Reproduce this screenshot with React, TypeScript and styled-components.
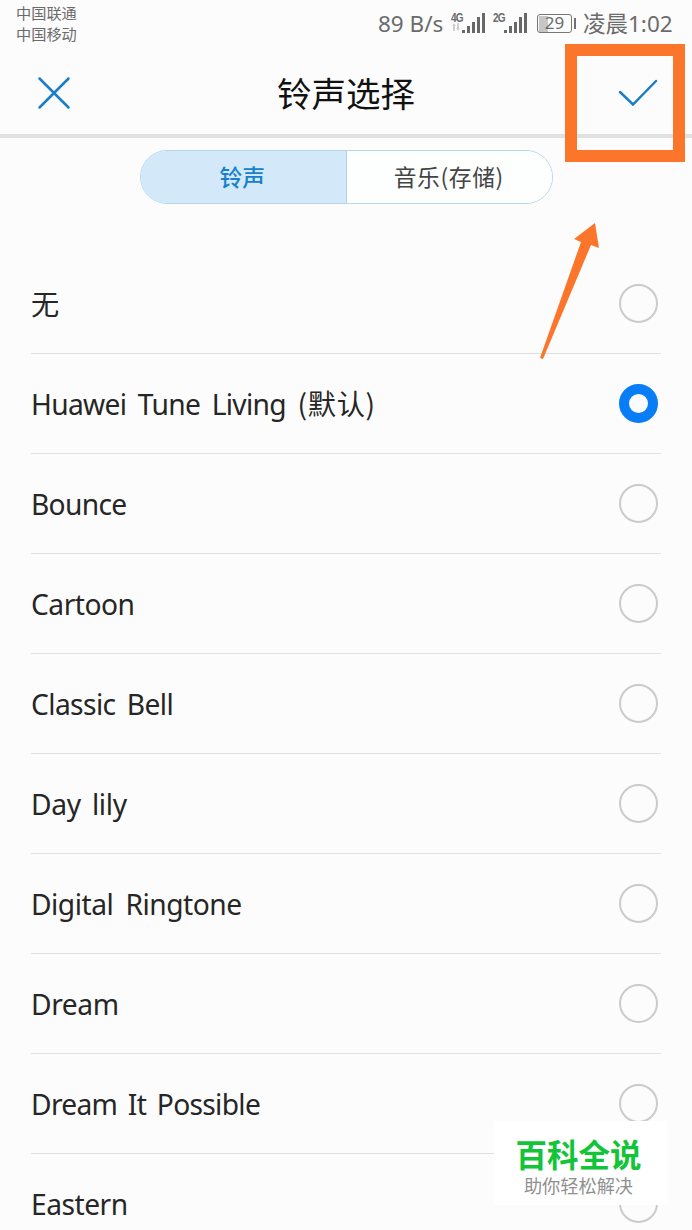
import React from "react";
import styled, { createGlobalStyle } from "styled-components";

const ORANGE = "#fb762b";

const GlobalStyle = createGlobalStyle`
  * { box-sizing: border-box; }
  html, body { margin: 0; background: #fcfcfc; overflow: hidden; }
`;

const Screen = styled.main`
  position: relative;
  display: flex;
  flex-direction: column;
  width: 692px;
  height: 1230px;
  overflow: hidden;
  background: #fcfcfc;
  font-family: "Noto Sans", "Noto Sans CJK SC", sans-serif;
  color: #262626;
`;

const StatusBar = styled.div`
  display: flex;
  flex: none;
  justify-content: space-between;
  height: 48px;
  padding: 2px 20px 0 16px;
  color: #6b6b6b;
`;

const Carriers = styled.div`
  display: flex;
  flex-direction: column;
  font: 15.2px/21px "Noto Sans CJK SC", sans-serif;
`;

const StatusItems = styled.div`
  display: flex;
  align-items: center;
  height: 42px;
`;

const StatusText = styled.span<{ $width: number }>`
  width: ${(p) => p.$width}px;
  padding-top: 1px;
  font-size: 22.5px;
  line-height: 40px;
  white-space: nowrap;
`;

const Clock = styled(StatusText)`
  margin-left: 7px;
`;

const Signal = styled.div<{ $gap: number }>`
  display: flex;
  align-items: flex-start;
  height: 22px;
  margin: 0 ${(p) => p.$gap}px 1px 0;
`;

const NetworkType = styled.div`
  display: flex;
  flex-direction: column;
  width: 11px;
  font: bold 10px/11px "Liberation Sans", sans-serif;
  letter-spacing: -0.9px;
`;

const Generation = styled.span`
  transform: scaleY(1.35);
`;

const Battery = styled.div`
  display: flex;
  align-items: center;
  justify-content: center;
  width: 35px;
  height: 19px;
  border: 1.5px solid #777;
  border-radius: 3px;
  background: linear-gradient(90deg, #c6c6c6 9px, transparent 9px) 1px 1px no-repeat;
  font-size: 17px;
  line-height: 16px;
`;

const BatteryTip = styled.div`
  width: 2px;
  height: 11px;
  margin-left: 2px;
  background: #707070;
`;

const Header = styled.header`
  display: grid;
  flex: none;
  grid-template-columns: 108px 1fr 108px;
  align-items: center;
  height: 90px;
  padding-top: 3px;
  border-bottom: 4px solid #e1e1e1;
`;

const IconButton = styled.button`
  display: flex;
  justify-content: center;
  padding: 0;
  border: 0;
  background: none;
`;

const Title = styled.h1`
  margin: 0;
  padding-bottom: 2px;
  font: 400 34.5px/50px "Noto Sans CJK SC", sans-serif;
  color: #111;
  text-align: center;
`;

const Tabs = styled.div`
  display: flex;
  flex: none;
  align-self: center;
  width: 413px;
  height: 54px;
  margin: 12px 0 50px;
  overflow: hidden;
  border: 1.5px solid #b5d8e8;
  border-radius: 27px;
`;

const Tab = styled.button<{ $active?: boolean }>`
  flex: 1;
  padding: ${(p) => (p.$active ? "0 2px 0 0" : "0 1px 0 0")};
  border: 0;
  border-right: ${(p) => (p.$active ? "1px solid #acd4e9" : "0")};
  background: ${(p) => (p.$active ? "#d3e8f8" : "#fdfefe")};
  color: ${(p) => (p.$active ? "#1681cb" : "#444")};
  font: ${(p) => (p.$active ? 500 : 400)} 22.8px/32px "Noto Sans CJK SC", sans-serif;
  letter-spacing: ${(p) => (p.$active ? 0 : 0.6)}px;
`;

const List = styled.div`
  display: flex;
  flex-direction: column;
  padding: 0 31px;
`;

const Row = styled.div`
  display: flex;
  flex: none;
  align-items: center;
  justify-content: space-between;
  height: 100px;
  padding-right: 3px;
  border-bottom: 1px solid #e1e1e1;
`;

const Label = styled.span<{ $tracking: number; $space: number }>`
  font-size: 28.2px;
  line-height: 40px;
  letter-spacing: ${(p) => p.$tracking}px;
  word-spacing: ${(p) => p.$space}px;
  white-space: nowrap;
`;

const Note = styled.span`
  font-family: "Noto Sans CJK SC", sans-serif;
  letter-spacing: 0.7px;
`;

const Radio = styled.span<{ $checked: boolean }>`
  width: 39px;
  height: 39px;
  border: ${(p) => (p.$checked ? "10px solid #087df5" : "2px solid #cbcbcb")};
  border-radius: 50%;
`;

const Highlight = styled.div`
  position: absolute;
  left: 565px;
  top: 44px;
  width: 120px;
  height: 118px;
  border: 12px solid ${ORANGE};
`;

const Pointer = styled.svg`
  position: absolute;
  left: 536px;
  top: 220px;
`;

const Watermark = styled.aside`
  position: absolute;
  left: 494px;
  top: 1121px;
  display: flex;
  flex-direction: column;
  align-items: center;
  width: 173px;
  height: 84px;
  padding: 12px 4px 0 0;
  background: #fff;
  font-family: "Noto Sans CJK SC", sans-serif;
`;

const Brand = styled.strong`
  font-size: 31.5px;
  line-height: 40px;
  font-weight: 700;
  color: #12c437;
`;

const Tagline = styled.span`
  font-size: 18.2px;
  line-height: 24px;
  color: #909090;
`;

const Bars = () => (
  <svg width="24" height="22" viewBox="0 0 24 22" fill="#686868">
    <path d="M0 18h3v3H0zM5 14h3v7H5zM10 10h3v11h-3zM15 5h3v16h-3zM20 1h3v20h-3z" />
  </svg>
);

const tones: { name: string; note?: string; tracking: number; space: number }[] = [
  { name: "无", tracking: 0, space: 0 },
  { name: "Huawei Tune Living ", note: "(默认)", tracking: -0.7, space: 5 },
  { name: "Bounce", tracking: -0.7, space: 0 },
  { name: "Cartoon", tracking: -0.5, space: 0 },
  { name: "Classic Bell", tracking: -0.6, space: 4.5 },
  { name: "Day lily", tracking: -0.3, space: 4 },
  { name: "Digital Ringtone", tracking: -0.5, space: 5.5 },
  { name: "Dream", tracking: -0.4, space: 0 },
  { name: "Dream It Possible", tracking: -0.7, space: 4 },
  { name: "Eastern", tracking: -0.5, space: 0 },
];

export default function App() {
  return (
    <Screen>
      <GlobalStyle />
      <StatusBar>
        <Carriers>
          <span>中国联通</span>
          <span>中国移动</span>
        </Carriers>
        <StatusItems>
          <StatusText $width={73}>89 B/s</StatusText>
          <Signal $gap={7}>
            <NetworkType>
              <Generation>4G</Generation>
              <svg width="10" height="9" viewBox="0 0 10 9" fill="#cfcfcf">
                <path d="M1 3l2-3 2 3H4v5H2V3zM6 0h2v5h1L7 8 5 5h1z" />
              </svg>
            </NetworkType>
            <Bars />
          </Signal>
          <Signal $gap={9}>
            <NetworkType>
              <Generation>2G</Generation>
            </NetworkType>
            <Bars />
          </Signal>
          <Battery>29</Battery>
          <BatteryTip />
          <Clock $width={89}>凌晨1:02</Clock>
        </StatusItems>
      </StatusBar>
      <Header>
        <IconButton aria-label="Close">
          <svg width="34" height="34" viewBox="0 0 34 34" fill="none" stroke="#1b7dc5" strokeWidth="2.5" strokeLinecap="round">
            <path d="M2.5 2.5l29 29M31.5 2.5l-29 29" />
          </svg>
        </IconButton>
        <Title>铃声选择</Title>
        <IconButton aria-label="Confirm">
          <svg width="40" height="28" viewBox="0 0 40 28" fill="none" stroke="#1b7dc5" strokeWidth="2.5" strokeLinecap="round">
            <path d="M2 13l13 12.5L38 2" />
          </svg>
        </IconButton>
      </Header>
      <Tabs>
        <Tab $active>铃声</Tab>
        <Tab>音乐(存储)</Tab>
      </Tabs>
      <List>
        {tones.map((tone, i) => (
          <Row key={tone.name}>
            <Label $tracking={tone.tracking} $space={tone.space}>
              {tone.name}
              {tone.note && <Note>{tone.note}</Note>}
            </Label>
            <Radio $checked={i === 1} />
          </Row>
        ))}
      </List>
      <Highlight />
      <Pointer width="66" height="142" viewBox="0 0 66 142" fill={ORANGE}>
        <path d="M59 3L63 28L55 25L7 139L4 138L45 22L38 19Z" />
      </Pointer>
      <Watermark>
        <Brand>百科全说</Brand>
        <Tagline>助你轻松解决</Tagline>
      </Watermark>
    </Screen>
  );
}
